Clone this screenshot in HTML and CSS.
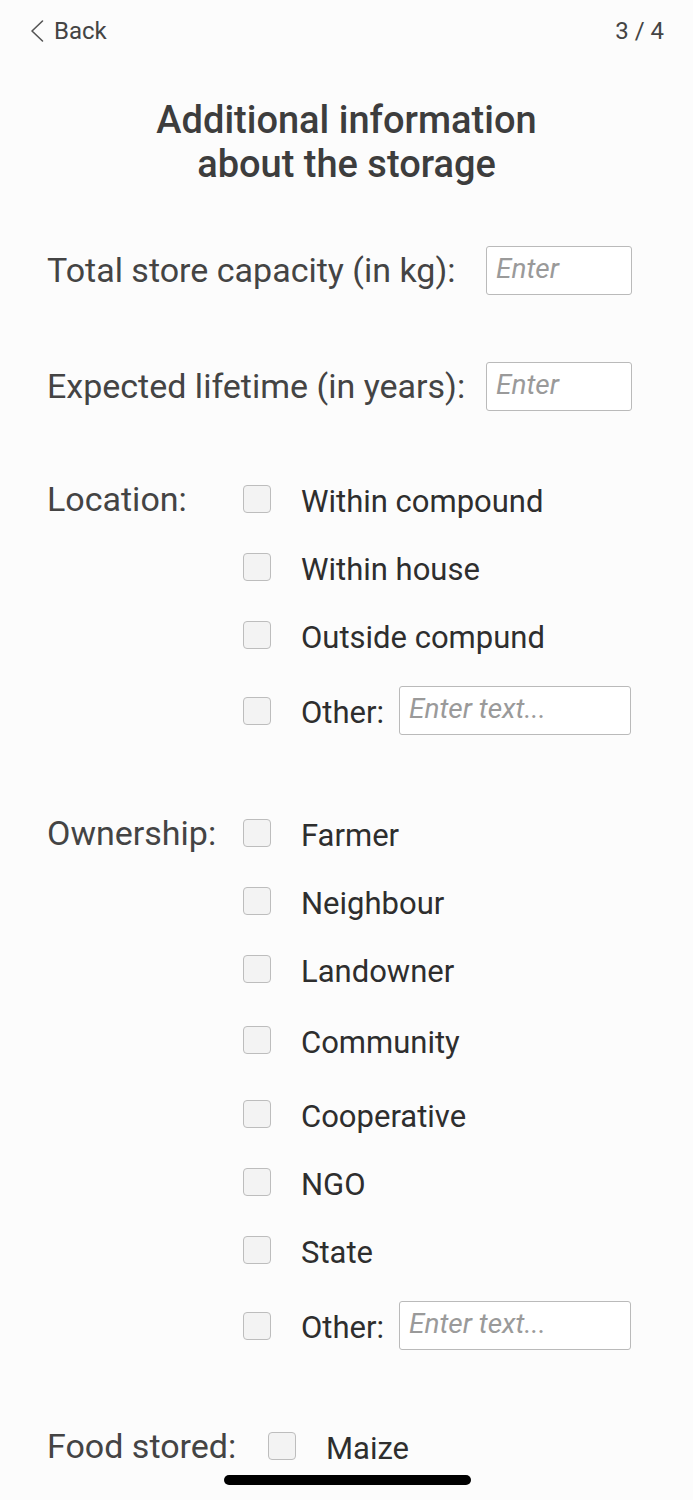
FILE: index.html
```html
<!DOCTYPE html>
<html lang="en">
<head>
<meta charset="utf-8">
<title>Additional information about the storage</title>
<link rel="stylesheet" href="styles.css">
</head>
<body>
<div class="screen">
  <header class="topbar">
    <a class="back" href="#">
      <svg class="chev" width="14" height="24" viewBox="0 0 14 24"><polyline points="12.5,2 2,12 12.5,22" fill="none" stroke="#555" stroke-width="1.6" stroke-linecap="round" stroke-linejoin="round"/></svg>
      <span>Back</span>
    </a>
    <span class="step">3 / 4</span>
  </header>

  <h1 class="title">Additional information<br>about the storage</h1>

  <form class="form">
    <div class="field field-first">
      <label class="label">Total store capacity (in kg):</label>
      <div class="input input-small"><span class="ph">Enter</span></div>
    </div>
    <div class="field field-second">
      <label class="label">Expected lifetime (in years):</label>
      <div class="input input-small"><span class="ph">Enter</span></div>
    </div>

    <div class="group group-location">
      <div class="label group-label">Location:</div>
      <div class="options">
        <div class="opt"><span class="box"></span><span class="opt-text">Within compound</span></div>
        <div class="opt"><span class="box"></span><span class="opt-text">Within house</span></div>
        <div class="opt"><span class="box"></span><span class="opt-text">Outside compund</span></div>
        <div class="opt opt-other"><span class="box"></span><span class="opt-text">Other:</span><div class="input input-wide"><span class="ph">Enter text...</span></div></div>
      </div>
    </div>

    <div class="group group-ownership">
      <div class="label group-label">Ownership:</div>
      <div class="options">
        <div class="opt"><span class="box"></span><span class="opt-text">Farmer</span></div>
        <div class="opt"><span class="box"></span><span class="opt-text">Neighbour</span></div>
        <div class="opt"><span class="box"></span><span class="opt-text">Landowner</span></div>
        <div class="opt opt-shift-a"><span class="box"></span><span class="opt-text">Community</span></div>
        <div class="opt opt-shift-b"><span class="box"></span><span class="opt-text">Cooperative</span></div>
        <div class="opt"><span class="box"></span><span class="opt-text">NGO</span></div>
        <div class="opt"><span class="box"></span><span class="opt-text">State</span></div>
        <div class="opt opt-other"><span class="box"></span><span class="opt-text">Other:</span><div class="input input-wide"><span class="ph">Enter text...</span></div></div>
      </div>
    </div>

    <div class="group group-food">
      <div class="label group-label">Food stored:</div>
      <div class="options">
        <div class="opt"><span class="box"></span><span class="opt-text">Maize</span></div>
      </div>
    </div>
  </form>

  <div class="home-indicator"></div>
</div>
</body>
</html>
```

FILE: styles.css
```css
* { box-sizing: border-box; }

html, body {
  margin: 0;
  padding: 0;
  background: #fcfcfc;
}

body {
  font-family: Roboto, "Liberation Sans", sans-serif;
  color: #444;
}

.screen {
  position: relative;
  width: 693px;
  height: 1500px;
  overflow: hidden;
}

.topbar {
  height: 62px;
  display: flex;
  align-items: center;
  justify-content: space-between;
  padding: 0 29px 0 30px;
  font-size: 24px;
  color: #444;
}

.back {
  display: flex;
  align-items: center;
  gap: 10px;
  color: #444;
  text-decoration: none;
}

.chev { display: block; }

.title {
  margin: 36px 0 0;
  text-align: center;
  font-size: 38px;
  line-height: 44px;
  font-weight: 500;
  color: #3d3d3d;
}

.form {
  padding: 0 61px 0 47px;
}

.label {
  font-size: 34px;
  color: #444;
}

.field {
  display: flex;
  align-items: center;
  justify-content: space-between;
  height: 48px;
}

.field-first { margin-top: 60px; }
.field-second { margin-top: 68px; }

.input {
  border: 1px solid #bababa;
  border-radius: 3px;
  background: #fff;
  height: 49px;
  display: flex;
  align-items: center;
  padding-left: 9px;
}

.input-small { width: 146px; }
.input-wide { width: 232px; }

.ph {
  font-style: italic;
  font-size: 28px;
  color: #9a9a9a;
  margin-top: -4px;
}

.group {
  display: flex;
}

.group-location { margin-top: 75px; }
.group-ownership { margin-top: 84px; }
.group-food { margin-top: 82px; }

.group-label {
  width: 196px;
  flex: none;
  line-height: 28px;
}

.group-food .group-label { width: 221px; }

.options {
  display: flex;
  flex-direction: column;
  gap: 40px;
}

.opt {
  display: flex;
  align-items: center;
  height: 28px;
}

.opt-shift-a { margin-top: 3px; }
.opt-shift-b { margin-top: 6px; }

.opt-other {
  height: 49px;
  margin-top: -3px;
}

.box {
  width: 28px;
  height: 28px;
  flex: none;
  border: 1px solid #bdbdbd;
  border-radius: 4px;
  background: #f3f3f3;
  margin-right: 30px;
}

.opt-text {
  font-size: 31px;
  color: #2e2e2e;
  margin-top: 4px;
}

.opt-other .opt-text { margin-right: 15px; }

.home-indicator {
  position: absolute;
  left: 224px;
  top: 1475px;
  width: 247px;
  height: 10px;
  border-radius: 5px;
  background: #000;
}
```
